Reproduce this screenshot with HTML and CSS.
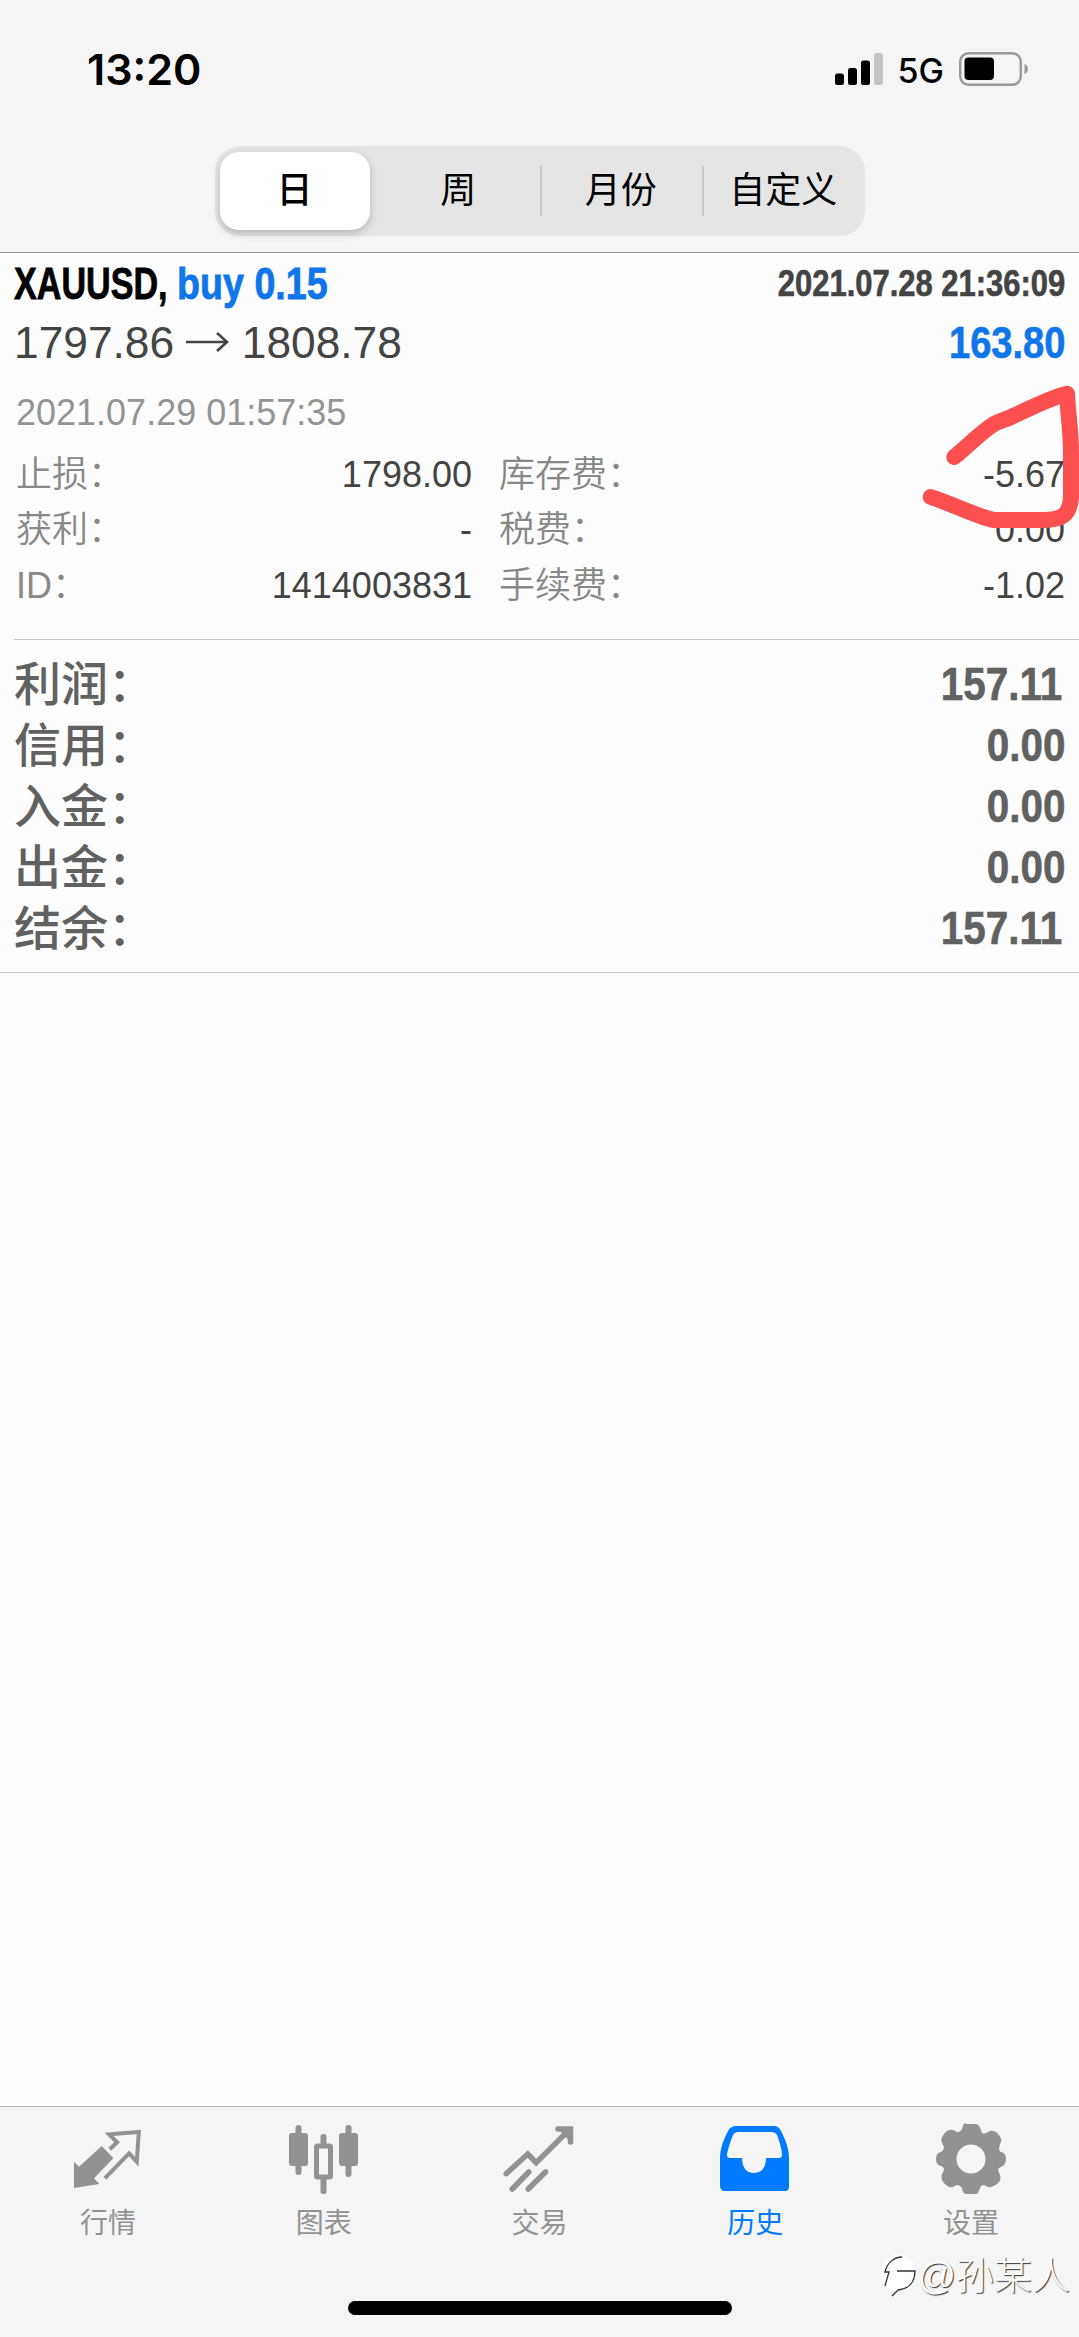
FILE: index.html
```html
<!DOCTYPE html>
<html lang="zh-CN">
<head>
    <meta charset="UTF-8">
    <meta name="viewport" content="width=device-width, initial-scale=1.0">
    <title>历史</title>
    <link rel="stylesheet" href="styles.css">
</head>
<body>
    <header class="header">
        <div class="status">
            <span class="time">13:20</span>
            <div class="status_right">
                <svg class="signal" width="48" height="32" viewBox="0 0 48 32">
                    <rect x="0" y="20.5" width="9" height="11.5" rx="2.5"/>
                    <rect x="13" y="15" width="9" height="17" rx="2.5"/>
                    <rect x="26" y="7.5" width="9" height="24.5" rx="2.5"/>
                    <rect x="39" y="0" width="9" height="32" rx="2.5" fill="#c4c4c4"/>
                </svg>
                <span class="network">5G</span>
                <svg class="battery" width="70" height="34" viewBox="0 0 70 34">
                    <rect x="1.2" y="1.2" width="60.6" height="31.6" rx="8.5" fill="none" stroke="#999" stroke-width="2.4"/>
                    <rect x="5.5" y="5.5" width="29.5" height="22.5" rx="4"/>
                    <path d="M65.5 12c4.5 1.5 4.5 8.5 0 10z" fill="#999"/>
                </svg>
            </div>
        </div>
        <nav class="segment">
            <span class="segment_item active">日</span>
            <span class="segment_item">周</span>
            <span class="segment_item line">月份</span>
            <span class="segment_item line">自定义</span>
        </nav>
    </header>

    <main class="content">
        <section class="deal">
            <div class="deal_row title">
                <div class="deal_name"><span class="symbol">XAUUSD,</span><span class="side">buy 0.15</span></div>
                <span class="narrow open_time">2021.07.28 21:36:09</span>
            </div>
            <div class="deal_row price">
                <span class="prices">1797.86
                    <svg class="arrow" width="43" height="22" viewBox="0 0 43 22"><path d="M0 11h40M31 2l10 9-10 9" fill="none" stroke="#444" stroke-width="2.6"/></svg>
                    1808.78</span>
                <span class="narrow profit">163.80</span>
            </div>
            <div class="close_time">2021.07.29 01:57:35</div>
            <div class="details">
                <span class="label">止损：</span><span class="value">1798.00</span>
                <span class="label second">库存费：</span><span class="value">-5.67</span>
                <span class="label">获利：</span><span class="value">-</span>
                <span class="label second">税费：</span><span class="value">0.00</span>
                <span class="label">ID：</span><span class="value">1414003831</span>
                <span class="label second">手续费：</span><span class="value">-1.02</span>
            </div>
            <!-- red pen mark over the swap value -->
            <svg class="marker" width="160" height="150" viewBox="0 0 160 150">
                <path d="M35.3 72C48 62 62 47 75 39C80 36 86 35 92 32C110 24 130 13 148 8.7C149 30 152 45 152 68L152 112C151 130 143 135 124 135L75 135C62 133 36 120 11.7 112" fill="none" stroke="#fc4f4f" stroke-width="16" stroke-linecap="round" stroke-linejoin="round"/>
            </svg>
        </section>

        <section class="summary">
            <div class="summary_row"><span class="summary_label">利润：</span><span class="narrow ones">157.11</span></div>
            <div class="summary_row"><span class="summary_label">信用：</span><span class="narrow">0.00</span></div>
            <div class="summary_row"><span class="summary_label">入金：</span><span class="narrow">0.00</span></div>
            <div class="summary_row"><span class="summary_label">出金：</span><span class="narrow">0.00</span></div>
            <div class="summary_row"><span class="summary_label">结余：</span><span class="narrow ones">157.11</span></div>
        </section>
    </main>

    <footer class="footer">
        <nav class="tabs">
            <div class="tab">
                <svg width="72" height="72" viewBox="0 0 72 72">
                    <path d="M2 38.7l5 5L29.8 23 41.4 35.3 22 55.3 27.4 61 2 65z" fill="currentColor"/>
                    <path d="M37.8 26.3L45.1 19.3 37.1 11.3 66.8 9 64.8 38.7 57.1 30.3 32.8 55.3" fill="none" stroke="currentColor" stroke-width="4"/>
                </svg>
                <span>行情</span>
            </div>
            <div class="tab">
                <svg width="72" height="72" viewBox="0 0 72 72" fill="currentColor">
                    <rect x="1" y="10" width="19" height="33" rx="3"/>
                    <rect x="7.5" y="2" width="6" height="50" rx="3"/>
                    <rect x="51" y="10" width="19" height="33" rx="3"/>
                    <rect x="57.5" y="2" width="6" height="52" rx="3"/>
                    <rect x="28.5" y="23" width="14" height="31" rx="1" fill="none" stroke="currentColor" stroke-width="5"/>
                    <rect x="32.5" y="11" width="6" height="11" rx="2.5"/>
                    <rect x="32.5" y="54" width="6" height="17" rx="2.5"/>
                </svg>
                <span>图表</span>
            </div>
            <div class="tab">
                <svg width="72" height="72" viewBox="0 0 72 72" fill="none" stroke="currentColor" stroke-width="5.5" stroke-linecap="round">
                    <path d="M3.2 50.7L24.8 31 33.2 39.7 64 9"/>
                    <path d="M9.2 66L25.8 49M25.2 66L42.5 49"/>
                    <path d="M55 6H67.5V19" fill="currentColor"/>
                </svg>
                <span>交易</span>
            </div>
            <div class="tab active">
                <svg width="72" height="72" viewBox="0 0 72 72">
                    <path d="M18 3h36c4 0 6 1 8 5 4 8 8 17 8 27v28c0 3-1 5-4 5H6c-3 0-5-2-5-5V35C1 25 5 16 9 8c2-4 5-5 9-5z" fill="currentColor"/>
                    <path d="M20 9h32c3 0 5 1 6 3 2 5 5 14 5 20 0 2-1 3-3 3H47c0 9-4 15-12 15s-12-6-12-15H11c-2 0-3-1-3-3 1-7 4-15 6-20 1-2 3-3 6-3z" fill="#f5f5f5"/>
                </svg>
                <span>历史</span>
            </div>
            <div class="tab">
                <svg width="72" height="72" viewBox="0 0 72 72">
                    <path fill="currentColor" fill-rule="evenodd" d="M31 1h10q3 0 5 6l1 3q2 1 4 0l4-2q5-1 9 4t1 9l-1 5q0 2 2 3 5 1 5 7t-5 8q-3 1-3 3l2 5q2 5-3 9t-9 3l-4-2q-3 0-4 3-2 6-4 6H31q-3 0-4-6-2-3-5-3l-4 2q-5 1-9-4t-2-9l2-4q0-3-3-4-5-1-5-7t5-7q3-2 3-5l-2-4q-2-4 2-9t9-4l4 2q3 1 5-3 1-6 4-6zM36 21.5a14.5 14.5 0 1 0 0 29 14.5 14.5 0 1 0 0-29z"/>
                </svg>
                <span>设置</span>
            </div>
        </nav>
        <div class="home_bar"></div>
        <div class="watermark">
            <svg width="38" height="46" viewBox="0 0 38 46">
                <circle cx="19" cy="20" r="18" fill="#fff"/>
                <path d="M6 33l4-14h-4c2-9 9-15 17-15M18 18h18c0 12-7 18-17 19l-6 6" fill="none" stroke="#333" stroke-width="1.3"/>
            </svg>
            <span>@孙某人</span>
        </div>
    </footer>
</body>
</html>
```

FILE: styles.css
```css
body{
    margin: 0;
    width: 1079px;
    height: 2337px;
    display: flex;
    flex-direction: column;
    position: relative;
    overflow: hidden;
    background-color: #fdfdfd;
    font-family: "Liberation Sans", "Noto Sans CJK SC", sans-serif;
    color: #444;
}
.header{
    height: 252px;
    background-color: #f5f5f5;
    border-bottom: 1px solid #999;
}
.status{
    display: flex;
    justify-content: space-between;
    align-items: center;
    height: 146px;
    padding: 0 50px 0 87px;
    box-sizing: border-box;
    font-family: Inter, sans-serif;
    color: #000;
}
.time{
    font-size: 43px;
    font-weight: 600;
    line-height: 50px;
    padding-bottom: 9px;
}
.status_right{
    display: flex;
    align-items: center;
    padding-bottom: 9px;
}
.network{
    font-size: 34px;
    font-weight: 500;
    margin: 3px 15px 0 15px;
}
.segment{
    display: grid;
    grid-template-columns: repeat(4, 1fr);
    width: 650px;
    height: 90px;
    margin: 0 auto;
    padding: 6px 0;
    box-sizing: border-box;
    border-radius: 25px;
    background-color: #e5e5e6;
}
.segment_item{
    display: flex;
    justify-content: center;
    align-items: center;
    font-size: 36px;
    line-height: 50px;
    color: #000;
    background: no-repeat left 14px / 2px 50px;
}
.segment_item.line{
    background-image: linear-gradient(#c9c9cc, #c9c9cc);
}
.segment_item.active{
    width: 150px;
    margin-left: 5px;
    border-radius: 19px;
    background-color: #fff;
    font-weight: 500;
    box-shadow: 0 3px 8px rgba(0, 0, 0, .22);
}
/* condensed bold figures */
.narrow{
    font-weight: bold;
    -webkit-text-stroke: .6px;
    transform: scaleX(.86);
    transform-origin: right;
}
.deal{
    position: relative;
    height: 386px;
    margin-left: 14px;
    padding-right: 14px;
    border-bottom: 1px solid #c8c8c8;
}
.deal_row{
    display: flex;
    justify-content: space-between;
    align-items: flex-start;
}
.title{
    height: 62px;
    line-height: 62px;
}
.deal_name{
    display: flex;
    font-size: 44.3px;
    font-weight: bold;
    white-space: nowrap;
    -webkit-text-stroke: .8px;
}
.symbol{
    width: 163px;
    color: #000;
    transform: scaleX(.77);
    transform-origin: left;
}
.side{
    transform: scaleX(.85);
    transform-origin: left;
}
.side, .profit{
    color: #0f75ea;
}
.open_time{
    font-size: 36px;
    line-height: 61px;
}
.price{
    height: 58px;
    line-height: 55px;
    font-size: 44.3px;
}
.arrow{
    vertical-align: 5px;
}
.close_time{
    height: 74px;
    line-height: 80px;
    padding-left: 2px;
    font-size: 36px;
    color: #949494;
}
.details{
    display: grid;
    grid-template-columns: 150px 306px 220px 1fr;
    grid-auto-rows: 55.3px;
    line-height: 55px;
    font-size: 36px;
    padding-left: 2px;
}
.label{
    color: #888;
    font-weight: 350;
}
.value{
    text-align: right;
}
.label.second{
    padding-left: 27px;
}
.marker{
    position: absolute;
    right: 0;
    top: 132px;
}
.summary{
    padding: 13px 14px 14px;
    border-bottom: 1px solid #c8c8c8;
}
.summary_row{
    display: flex;
    justify-content: space-between;
    height: 61px;
    line-height: 61px;
    font-size: 47px;
    font-weight: 500;
    color: #616161;
}
.summary_label{
    padding-top: 1px;
}
.ones{
    margin-right: 3px;
}
.footer{
    position: relative;
    margin-top: auto;
    height: 230px;
    border-top: 1px solid #b2b2b2;
    background-color: #f5f5f5;
}
.tabs{
    display: grid;
    grid-template-columns: repeat(5, 1fr);
    padding-top: 16px;
}
.tab{
    display: flex;
    flex-direction: column;
    align-items: center;
    font-size: 28px;
    line-height: 40px;
    gap: 9px;
    color: #929292;
}
.tab.active{
    color: #007aff;
}
.home_bar{
    width: 384px;
    height: 14px;
    margin: 57px auto 0;
    border-radius: 7px;
    background-color: #000;
}
.watermark{
    position: absolute;
    right: 9px;
    top: 144px;
    display: flex;
    align-items: center;
    font-size: 38px;
    line-height: 50px;
    font-weight: 300;
    color: #fff;
    text-shadow: 1px 1px 1px #333;
}
```
